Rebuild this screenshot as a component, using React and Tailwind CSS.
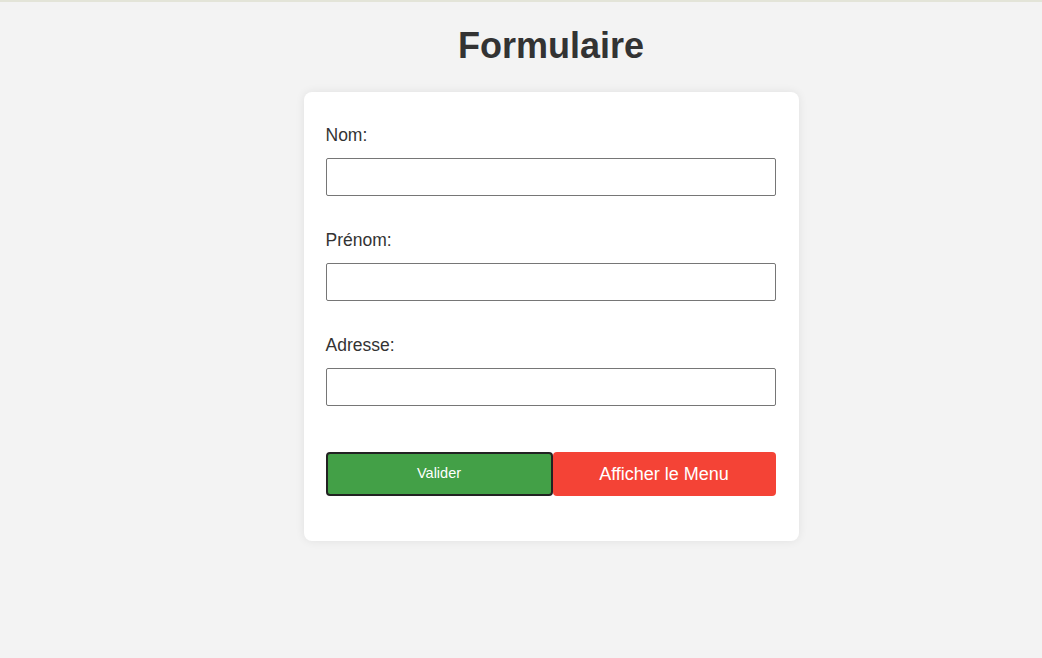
export default function App() {
  const fields = ["Nom:", "Prénom:", "Adresse:"];
  return (
    <div
      className="min-h-[658px] bg-[#f3f3f3] border-t-2 border-[#e3e4d8] pl-[60px]"
      style={{ fontFamily: '"Liberation Sans", Arial, sans-serif' }}
    >
      <h1 className="mt-[23px] text-center text-[36px] leading-[41px] font-bold text-[#333]">
        Formulaire
      </h1>
      <div className="mx-auto mt-[26px] w-[495px] rounded-[8px] bg-white pl-[22px] pr-[23px] pt-[33px] pb-[45px] shadow-[0_0_10px_rgba(0,0,0,0.08)]">
        {fields.map((f, i) => (
          <div key={f} className={i > 0 ? "mt-[34px]" : ""}>
            <label className="block text-[17.5px] leading-[21px] text-[#333]">{f}</label>
            <input
              type="text"
              className="mt-[12px] block h-[38px] w-[450px] rounded-[2px] border border-[#767676] bg-white px-2 outline-none"
            />
          </div>
        ))}
        <div className="mt-[46px] flex">
          <button className="flex h-[44px] w-[227px] items-center justify-center rounded-[4px] border-2 border-[#222] bg-[#43a047] text-[14.5px] text-white">
            Valider
          </button>
          <button className="flex h-[44px] w-[223px] items-center justify-center rounded-[4px] bg-[#f44336] text-[18px] text-white">
            Afficher le Menu
          </button>
        </div>
      </div>
    </div>
  );
}
